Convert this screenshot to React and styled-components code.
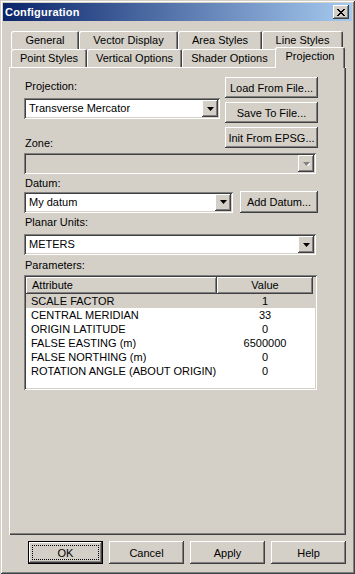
import React from "react"
import styled, { createGlobalStyle } from "styled-components"

const Global = createGlobalStyle`
  html, body {
    margin: 0;
    padding: 0;
    background: #d4d0c8;
  }
  body {
    font-family: "Liberation Sans", Arial, sans-serif;
    font-size: 11px;
    color: #000;
  }
`

const raised = `
  box-shadow: inset -1px -1px #404040, inset 1px 1px #ffffff,
    inset -2px -2px #808080, inset 2px 2px #d4d0c8;
`

const sunken = `
  box-shadow: inset 1px 1px #808080, inset -1px -1px #ffffff,
    inset 2px 2px #404040, inset -2px -2px #d4d0c8;
`

const Window = styled.div`
  width: 355px;
  height: 574px;
  box-sizing: border-box;
  padding: 3px;
  background: #d4d0c8;
  box-shadow: inset 1px 1px #d4d0c8, inset -1px -1px #404040,
    inset 2px 2px #ffffff, inset -2px -2px #808080;
  display: flex;
  flex-direction: column;
`

const TitleBar = styled.div`
  height: 18px;
  display: flex;
  align-items: center;
  padding: 0 3px 0 2px;
  background: linear-gradient(to right, #0a246a, #a6caf0);
`

const Title = styled.div`
  flex: 1;
  color: #fff;
  font-weight: bold;
  font-size: 11px;
  letter-spacing: 0.2px;
`

const CloseButton = styled.div`
  width: 16px;
  height: 14px;
  background: #d4d0c8;
  ${raised}
  display: flex;
  align-items: center;
  justify-content: center;
`

const Body = styled.div`
  flex: 1;
  display: flex;
  flex-direction: column;
  padding: 10px 6px 0 6px;
`

const TabStrip = styled.div`
  display: flex;
  flex-direction: column;
  padding-left: 2px;
`

const TabRow = styled.div`
  display: flex;
  height: 18px;
`

const Tab = styled.div`
  width: ${(p) => p.$w}px;
  height: ${(p) => (p.$active ? 21 : 18)}px;
  margin: ${(p) => (p.$active ? "-2px -2px -1px -2px" : "0")};
  position: relative;
  z-index: ${(p) => (p.$active ? 2 : 0)};
  box-sizing: border-box;
  background: #d4d0c8;
  border-radius: 2px 2px 0 0;
  box-shadow: inset 1px 1px #ffffff, inset -1px 0 #404040, inset -2px 0 #808080;
  text-align: center;
  padding-top: 3px;
  line-height: 13px;
  white-space: nowrap;
`

const Panel = styled.div`
  height: 468px;
  box-sizing: border-box;
  position: relative;
  z-index: 1;
  background: #d4d0c8;
  box-shadow: inset 1px 1px #ffffff, inset -1px -1px #404040,
    inset -2px -2px #808080;
  padding: 10px 28px 0 15px;
  display: flex;
  flex-direction: column;
`

const TopSection = styled.div`
  display: flex;
  justify-content: space-between;
`

const Column = styled.div`
  display: flex;
  flex-direction: column;
  gap: ${(p) => p.$gap || 0}px;
`

const Label = styled.div`
  line-height: 13px;
  height: 13px;
  margin-top: ${(p) => p.$mt || 0}px;
  margin-bottom: ${(p) => p.$mb || 0}px;
  padding-left: 1px;
`

const ComboBox = styled.div`
  width: ${(p) => p.$w}px;
  height: 21px;
  box-sizing: border-box;
  padding: 2px;
  margin-top: ${(p) => p.$mt || 0}px;
  display: flex;
  background: ${(p) => (p.$disabled ? "#d4d0c8" : "#ffffff")};
  ${sunken}
`

const ComboText = styled.div`
  flex: 1;
  padding-left: 3px;
  line-height: 17px;
  white-space: nowrap;
  overflow: hidden;
`

const DropButton = styled.div`
  width: 16px;
  height: 17px;
  box-sizing: border-box;
  background: #d4d0c8;
  ${raised}
  display: flex;
  align-items: center;
  justify-content: center;
`

const Button = styled.div`
  width: ${(p) => p.$w}px;
  height: ${(p) => p.$h || 21}px;
  box-sizing: border-box;
  background: #d4d0c8;
  ${raised}
  display: flex;
  align-items: center;
  justify-content: center;
  white-space: nowrap;
`

const DefaultButton = styled(Button)`
  border: 1px solid #000;
  position: relative;
  &::after {
    content: "";
    position: absolute;
    inset: 3px;
    border: 1px dotted #000;
  }
`

const FieldRow = styled.div`
  display: flex;
  align-items: center;
  justify-content: space-between;
  margin-top: ${(p) => p.$mt || 0}px;
`

const List = styled.div`
  width: 293px;
  height: 115px;
  box-sizing: border-box;
  padding: 2px;
  background: #ffffff;
  ${sunken}
`

const HeaderRow = styled.div`
  display: flex;
  height: 17px;
  background: #d4d0c8;
`

const HeaderCell = styled.div`
  width: ${(p) => p.$w}px;
  box-sizing: border-box;
  ${raised}
  line-height: 17px;
  padding-left: ${(p) => (p.$center ? 0 : 6)}px;
  text-align: ${(p) => (p.$center ? "center" : "left")};
`

const Row = styled.div`
  display: flex;
  height: 14px;
  line-height: 14px;
  background: ${(p) => (p.$selected ? "#d4d0c8" : "transparent")};
`

const Cell = styled.div`
  width: ${(p) => p.$w}px;
  box-sizing: border-box;
  padding-left: ${(p) => (p.$center ? 0 : 5)}px;
  text-align: ${(p) => (p.$center ? "center" : "left")};
  white-space: nowrap;
`

const ButtonRow = styled.div`
  display: flex;
  gap: 6px;
  padding-left: 19px;
  margin-top: 6px;
`

const Arrow = ({ disabled }) => (
  <svg width="7" height="4" viewBox="0 0 7 4">
    {disabled && <polygon points="1,1 8,1 4.5,5" fill="#fff" />}
    <polygon points="0,0 7,0 3.5,4" fill={disabled ? "#808080" : "#000"} />
  </svg>
)

const Combo = ({ w, text, disabled, mt }) => (
  <ComboBox $w={w} $disabled={disabled} $mt={mt}>
    <ComboText>{text}</ComboText>
    <DropButton>
      <Arrow disabled={disabled} />
    </DropButton>
  </ComboBox>
)

const backTabs = [
  ["General", 68],
  ["Vector Display", 99],
  ["Area Styles", 84],
  ["Line Styles", 81],
]

const frontTabs = [
  ["Point Styles", 76],
  ["Vertical Options", 95],
  ["Shader Options", 95],
  ["Projection", 70, true],
]

const params = [
  ["SCALE FACTOR", "1"],
  ["CENTRAL MERIDIAN", "33"],
  ["ORIGIN LATITUDE", "0"],
  ["FALSE EASTING (m)", "6500000"],
  ["FALSE NORTHING (m)", "0"],
  ["ROTATION ANGLE (ABOUT ORIGIN)", "0"],
]

export default function App() {
  return (
    <>
      <Global />
      <Window>
        <TitleBar>
          <Title>Configuration</Title>
          <CloseButton>
            <svg width="8" height="7" viewBox="0 0 8 7">
              <path
                d="M0 0h2v1h1v1h2V1h1V0h2v1H7v1H6v1H5v1h1v1h1v1h1v1H6V6H5V5H3v1H2v1H0V6h1V5h1V4h1V3H2V2H1V1H0z"
                fill="#000"
              />
            </svg>
          </CloseButton>
        </TitleBar>
        <Body>
          <TabStrip>
            <TabRow>
              {backTabs.map(([t, w]) => (
                <Tab key={t} $w={w}>
                  {t}
                </Tab>
              ))}
            </TabRow>
            <TabRow>
              {frontTabs.map(([t, w, active]) => (
                <Tab key={t} $w={w} $active={active}>
                  {t}
                </Tab>
              ))}
            </TabRow>
          </TabStrip>
          <Panel>
            <TopSection>
              <Column>
                <Label $mt={3} $mb={5}>Projection:</Label>
                <Combo w={196} text="Transverse Mercator" />
                <Label $mt={18}>Zone:</Label>
              </Column>
              <Column $gap={4}>
                <Button $w={93}>Load From File...</Button>
                <Button $w={93}>Save To File...</Button>
                <Button $w={93}>Init From EPSG...</Button>
              </Column>
            </TopSection>
            <Combo w={292} text="" disabled mt={3} />
            <Label $mt={3} $mb={1}>Datum:</Label>
            <FieldRow>
              <Combo w={209} text="My datum" />
              <Button $w={78} $h={22}>Add Datum...</Button>
            </FieldRow>
            <Label $mt={3} $mb={5}>Planar Units:</Label>
            <Combo w={292} text="METERS" />
            <Label $mt={4} $mb={3}>Parameters:</Label>
            <List>
              <HeaderRow>
                <HeaderCell $w={191}>Attribute</HeaderCell>
                <HeaderCell $w={96} $center>Value</HeaderCell>
              </HeaderRow>
              {params.map(([a, v], i) => (
                <Row key={a} $selected={i === 0}>
                  <Cell $w={191}>{a}</Cell>
                  <Cell $w={96} $center>{v}</Cell>
                </Row>
              ))}
            </List>
          </Panel>
          <ButtonRow>
            <DefaultButton $w={75} $h={23}>OK</DefaultButton>
            <Button $w={75} $h={23}>Cancel</Button>
            <Button $w={75} $h={23}>Apply</Button>
            <Button $w={75} $h={23}>Help</Button>
          </ButtonRow>
        </Body>
      </Window>
    </>
  )
}
